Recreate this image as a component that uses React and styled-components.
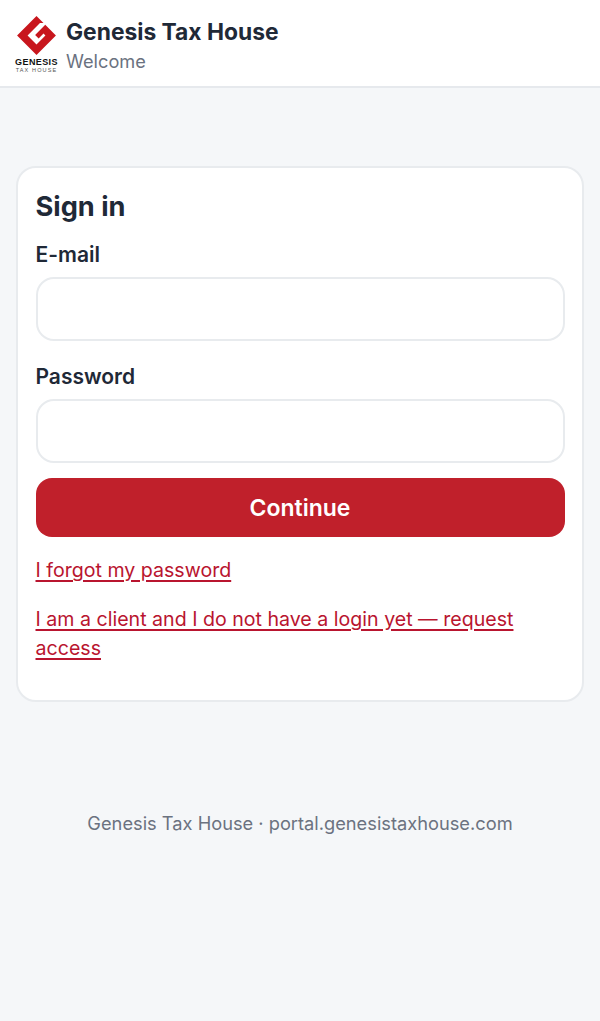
import React from "react";
import styled, { createGlobalStyle } from "styled-components";

const Global = createGlobalStyle`
  html, body { margin: 0; padding: 0; background: #f5f7f9; }
  * { box-sizing: border-box; }
  body { font-family: Inter, "Liberation Sans", sans-serif; color: #1f2937; }
`;
const Page = styled.div`min-height: 1021px; display: flex; flex-direction: column;`;
const Header = styled.header`
  height: 88px; background: #fff; border-bottom: 2px solid #e6e9ed;
  display: flex; align-items: center; gap: 8px; padding: 0 16px 0 15px;
`;
const LogoBox = styled.div`width: 43px; padding-top: 4px; display: flex; flex-direction: column; align-items: center;`;
const LogoName = styled.span`font: 700 9px/9px "Liberation Sans", sans-serif; color: #111; letter-spacing: 0.4px; margin-top: 3px;`;
const LogoSub = styled.span`font: 400 5.5px/7px "Liberation Sans", sans-serif; color: #555; letter-spacing: 1.15px; white-space: nowrap;`;
const Titles = styled.div`display: flex; flex-direction: column; gap: 1px; padding-top: 4px;`;
const Title = styled.div`font-size: 22.8px; line-height: 30px; font-weight: 700; color: #1f2937;`;
const Sub = styled.div`font-size: 18.2px; line-height: 26px; color: #6b7280;`;
const Card = styled.form`
  margin: 78px 16px 0; padding: 20px 17.5px 38px; height: 536px; background: #fff;
  border: 2px solid #e8ebee; border-radius: 20px;
`;
const Heading = styled.h1`margin: 0 0 14px; font-size: 27.2px; line-height: 38px; font-weight: 700; color: #1f2937;`;
const Label = styled.label`display: block; font-size: 21px; line-height: 30px; font-weight: 600; color: #1f2937; margin-bottom: 7px;`;
const Input = styled.input`
  display: block; width: 100%; height: 64px; margin-bottom: 21px; background: #fff;
  border: 2px solid #e8ebee; border-radius: 18px; outline: none;
`;
const Button = styled.button`
  display: block; width: 100%; height: 59px; margin-top: -6px; border: 0; border-radius: 16px;
  background: #c0202b; color: #fff; font: 600 23px/30px Inter, sans-serif;
`;
const Links = styled.div`display: flex; flex-direction: column; gap: 20px; margin-top: 19px;`;
const Link = styled.a`
  font-size: 19.6px; line-height: 29px; color: #b9152f;
  text-decoration: underline; text-decoration-thickness: 1.5px; text-underline-offset: 3px;
`;
const Footer = styled.footer`margin-top: 108px; text-align: center; font-size: 18.25px; line-height: 26px; color: #6b7280;`;

const Logo = () => (
  <svg width="39" height="39" viewBox="0 0 142 142">
    <g transform="rotate(-45 71 71) translate(21 21)">
      <path fill="#c8161d" d="M0 0H100V36L91 27H27V73H73V63H48V45H100V100H0Z" />
    </g>
  </svg>
);

export default function App() {
  return (
    <Page>
      <Global />
      <Header>
        <LogoBox>
          <Logo />
          <LogoName>GENESIS</LogoName>
          <LogoSub>TAX HOUSE</LogoSub>
        </LogoBox>
        <Titles>
          <Title>Genesis Tax House</Title>
          <Sub>Welcome</Sub>
        </Titles>
      </Header>
      <Card onSubmit={(e) => e.preventDefault()}>
        <Heading>Sign in</Heading>
        <Label>E-mail</Label>
        <Input type="email" />
        <Label>Password</Label>
        <Input type="password" />
        <Button type="submit">Continue</Button>
        <Links>
          <Link href="#">I forgot my password</Link>
          <Link href="#">I am a client and I do not have a login yet — request access</Link>
        </Links>
      </Card>
      <Footer>Genesis Tax House · portal.genesistaxhouse.com</Footer>
    </Page>
  );
}
